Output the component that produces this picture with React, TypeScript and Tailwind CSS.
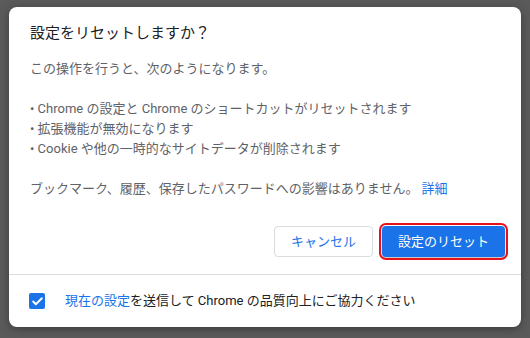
import { Check } from "lucide-react";

const font = { fontFamily: 'Roboto, "Noto Sans CJK JP", sans-serif' };

export default function App() {
  return (
    <div
      className="w-[530px] h-[338px] bg-[#5a5a5a] pl-[9px] pt-[7px] overflow-hidden"
      style={font}
    >
      <div className="w-[512px] h-[320px] bg-white rounded-[8px] flex flex-col shadow-[0_2px_8px_rgba(0,0,0,0.35)]">
        {/* Title */}
        <h1 className="px-[21px] pt-[14px] text-[15px] leading-[24px] text-[#202124]">
          設定をリセットしますか？
        </h1>

        {/* Body */}
        <div className="px-[21px] mt-[14px] text-[13px] leading-[20px] text-[#5f6368]">
          <p>この操作を行うと、次のようになります。</p>
          <ul className="mt-[20px]">
            <li>• Chrome の設定と Chrome のショートカットがリセットされます</li>
            <li>• 拡張機能が無効になります</li>
            <li>• Cookie や他の一時的なサイトデータが削除されます</li>
          </ul>
          <p className="mt-[20px]">
            ブックマーク、履歴、保存したパスワードへの影響はありません。
            <a className="ml-[3px] text-[#1a73e8] cursor-pointer">詳細</a>
          </p>
        </div>

        {/* Buttons */}
        <div className="flex justify-end gap-[9px] pr-[16px] mt-[27px]">
          <button className="h-[31px] px-[16px] rounded-[4px] border border-[#dadce0] bg-white text-[13px] text-[#1a73e8]">
            キャンセル
          </button>
          <button className="h-[31px] px-[16px] rounded-[4px] bg-[#1a73e8] text-[13px] text-white shadow-[0_1px_2px_rgba(0,0,0,0.3)] outline-2 outline-[#e8101a] outline-offset-1">
            設定のリセット
          </button>
        </div>

        {/* Footer */}
        <div className="mt-[17px] border-t border-[#dadce0] flex-1 flex items-center px-[20px]">
          <span className="w-[16px] h-[16px] rounded-[2px] bg-[#1a73e8] flex items-center justify-center">
            <Check className="w-[13px] h-[13px] text-white" strokeWidth={3.5} />
          </span>
          <p className="ml-[20px] text-[13px] text-[#202124]">
            <span className="text-[#1a73e8]">現在の設定</span>
            を送信して Chrome の品質向上にご協力ください
          </p>
        </div>
      </div>
    </div>
  );
}
